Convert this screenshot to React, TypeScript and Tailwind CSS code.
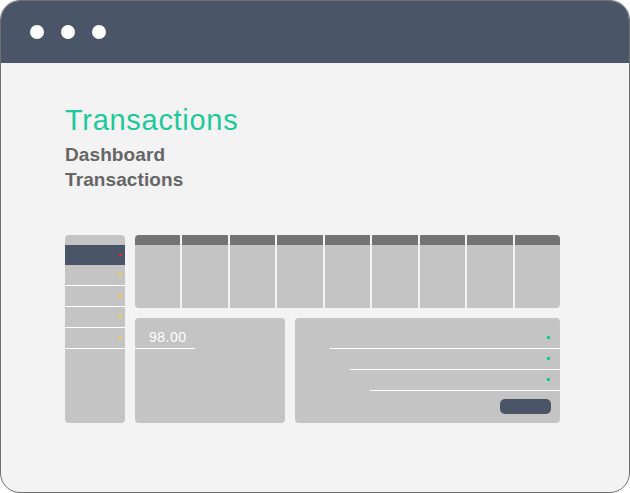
import React from "react";

const cols = Array.from({ length: 9 }, (_, i) => i);
const sideRows = [0, 1, 2, 3];
const listRows = ["ml-[35px]", "ml-[55px]", "ml-[75px]"];

export default function App() {
  return (
    <div
      className="w-[630px] h-[493px] border border-[#707070] rounded-[20px] overflow-hidden bg-[#f3f3f3] flex flex-col"
      style={{ fontFamily: '"Liberation Sans", Arial, sans-serif' }}
    >
      {/* window bar */}
      <div className="h-[62px] shrink-0 bg-[#4a5568] flex items-center gap-[17px] pl-[29px]">
        <div className="w-[14px] h-[14px] rounded-full bg-white" />
        <div className="w-[14px] h-[14px] rounded-full bg-white" />
        <div className="w-[14px] h-[14px] rounded-full bg-white" />
      </div>

      <div className="pl-[64px] pr-[69px] pt-[40px]">
        <h1 className="text-[29px] leading-[34px] tracking-[0.7px] text-[#1dc99b]">Transactions</h1>
        <div className="mt-[5px] font-bold text-[19px] leading-[25px] tracking-[0.1px] text-[#666666]">
          <div>Dashboard</div>
          <div>Transactions</div>
        </div>

        <div className="mt-[43px] flex gap-[10px]">
          {/* sidebar */}
          <div className="w-[60px] h-[188px] shrink-0 rounded-[4px] bg-[#c4c4c4] pt-[10px]">
            <div className="h-[20px] bg-[#4a5568] flex justify-end pt-[9px] pr-[3px]">
              <div className="w-[3px] h-[2px] bg-[#e8262c]" />
            </div>
            {sideRows.map((r) => (
              <div key={r} className="h-[21px] border-b border-white flex justify-end pt-[8px] pr-[3px]">
                <div className="w-[3px] h-[3px] bg-[#f3cd5c]" />
              </div>
            ))}
          </div>

          <div className="flex-1 flex flex-col gap-[10px]">
            {/* table */}
            <div className="h-[73px] rounded-[4px] overflow-hidden grid grid-cols-9 gap-x-[2px]">
              {cols.map((c) => (
                <div key={c} className="flex flex-col">
                  <div className="h-[10px] bg-[#737373]" />
                  <div className="flex-1 bg-[#c4c4c4]" />
                </div>
              ))}
            </div>

            <div className="h-[105px] flex gap-[10px]">
              <div className="w-[150px] shrink-0 rounded-[4px] bg-[#c4c4c4] pt-[10px]">
                <div className="w-[60px] h-[21px] border-b border-white pl-[14px] text-white text-[14px] leading-[18px] tracking-[0.5px]">
                  98.00
                </div>
              </div>

              <div className="flex-1 rounded-[4px] bg-[#c4c4c4] pt-[10px] flex flex-col">
                {listRows.map((m) => (
                  <div key={m} className={`${m} h-[21px] border-b border-white flex justify-end pt-[8px] pr-[10px]`}>
                    <div className="w-[3px] h-[3px] bg-[#14c896]" />
                  </div>
                ))}
                <div className="mt-[8px] self-end mr-[9px] w-[51px] h-[15px] rounded-[5px] bg-[#4a5568]" />
              </div>
            </div>
          </div>
        </div>
      </div>
    </div>
  );
}
